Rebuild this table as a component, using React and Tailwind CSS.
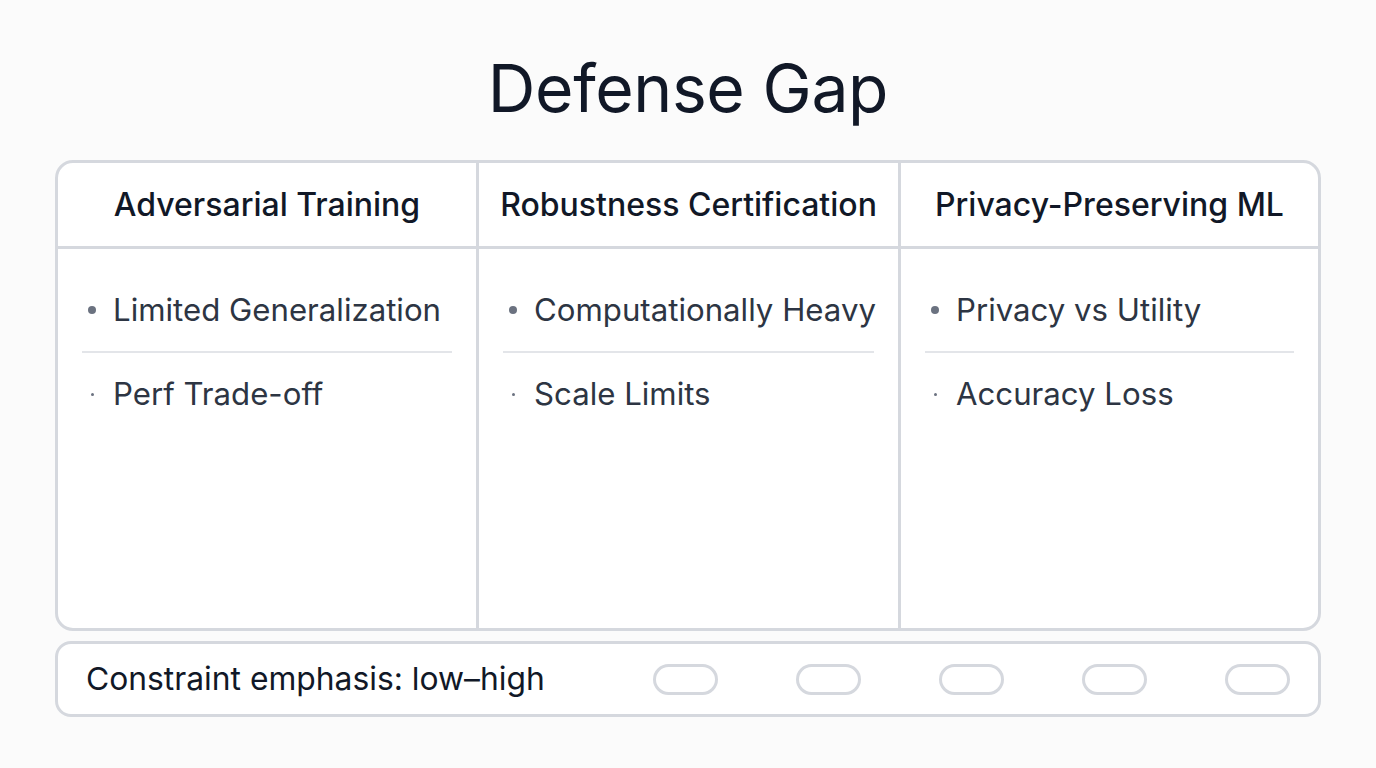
import React from 'react';

const columns = [
  {
    title: 'Adversarial Training',
    items: ['Limited Generalization', 'Perf Trade-off'],
  },
  {
    title: 'Robustness Certification',
    items: ['Computationally Heavy', 'Scale Limits'],
  },
  {
    title: 'Privacy-Preserving ML',
    items: ['Privacy vs Utility', 'Accuracy Loss'],
  },
];

function Column({ col, last }) {
  return (
    <div className={`flex flex-col ${last ? '' : 'border-r-[3px] border-[#d5d8de]'}`}>
      <div className="h-[86px] flex items-center justify-center border-b-[3px] border-[#d5d8de]">
        <h2 className="text-[32px] leading-9 font-medium text-[#111827] whitespace-nowrap">{col.title}</h2>
      </div>
      <ul className="px-[24px] pt-[20px]">
        {col.items.map((item, i) => (
          <li
            key={item}
            className={`flex items-center gap-[17px] pl-[6px] py-[23px] ${
              i === 0 ? 'border-b-2 border-[#e3e5e9]' : ''
            }`}
          >
            <span className="w-2 flex justify-center">
              {i === 0 ? (
                <span className="block w-2 h-2 rounded-full bg-[#6b7280]" />
              ) : (
                <span className="block w-[3px] h-[3px] rounded-full bg-[#6b7280]" />
              )}
            </span>
            <span className="text-[31.2px] leading-9 text-[#2d3543] whitespace-nowrap">{item}</span>
          </li>
        ))}
      </ul>
    </div>
  );
}

export default function App() {
  return (
    <div
      className="min-h-screen bg-[#fbfbfb] pt-[55px]"
      style={{ fontFamily: 'Inter, "Noto Sans", sans-serif' }}
    >
      <h1 className="text-center text-[66px] leading-[66px] text-[#111827] tracking-[-0.4px]">
        Defense Gap
      </h1>

      <div className="w-[1266px] mx-auto mt-[39px]">
        <div className="grid grid-cols-[421px_422px_1fr] h-[471px] bg-white border-[3px] border-[#d5d8de] rounded-[18px] overflow-hidden">
          {columns.map((col, i) => (
            <Column key={col.title} col={col} last={i === columns.length - 1} />
          ))}
        </div>

        <div className="mt-[10px] h-[76px] flex items-center bg-white border-[3px] border-[#d5d8de] rounded-[16px] pl-[28px] pr-[28px]">
          <span className="text-[31.8px] leading-9 text-[#111827] whitespace-nowrap">Constraint emphasis: low–high</span>
          <div className="ml-auto flex gap-[78px]">
            {[0, 1, 2, 3, 4].map((n) => (
              <span
                key={n}
                className="block w-[65px] h-[31px] rounded-full border-[3px] border-[#d5d8de]"
              />
            ))}
          </div>
        </div>
      </div>
    </div>
  );
}
